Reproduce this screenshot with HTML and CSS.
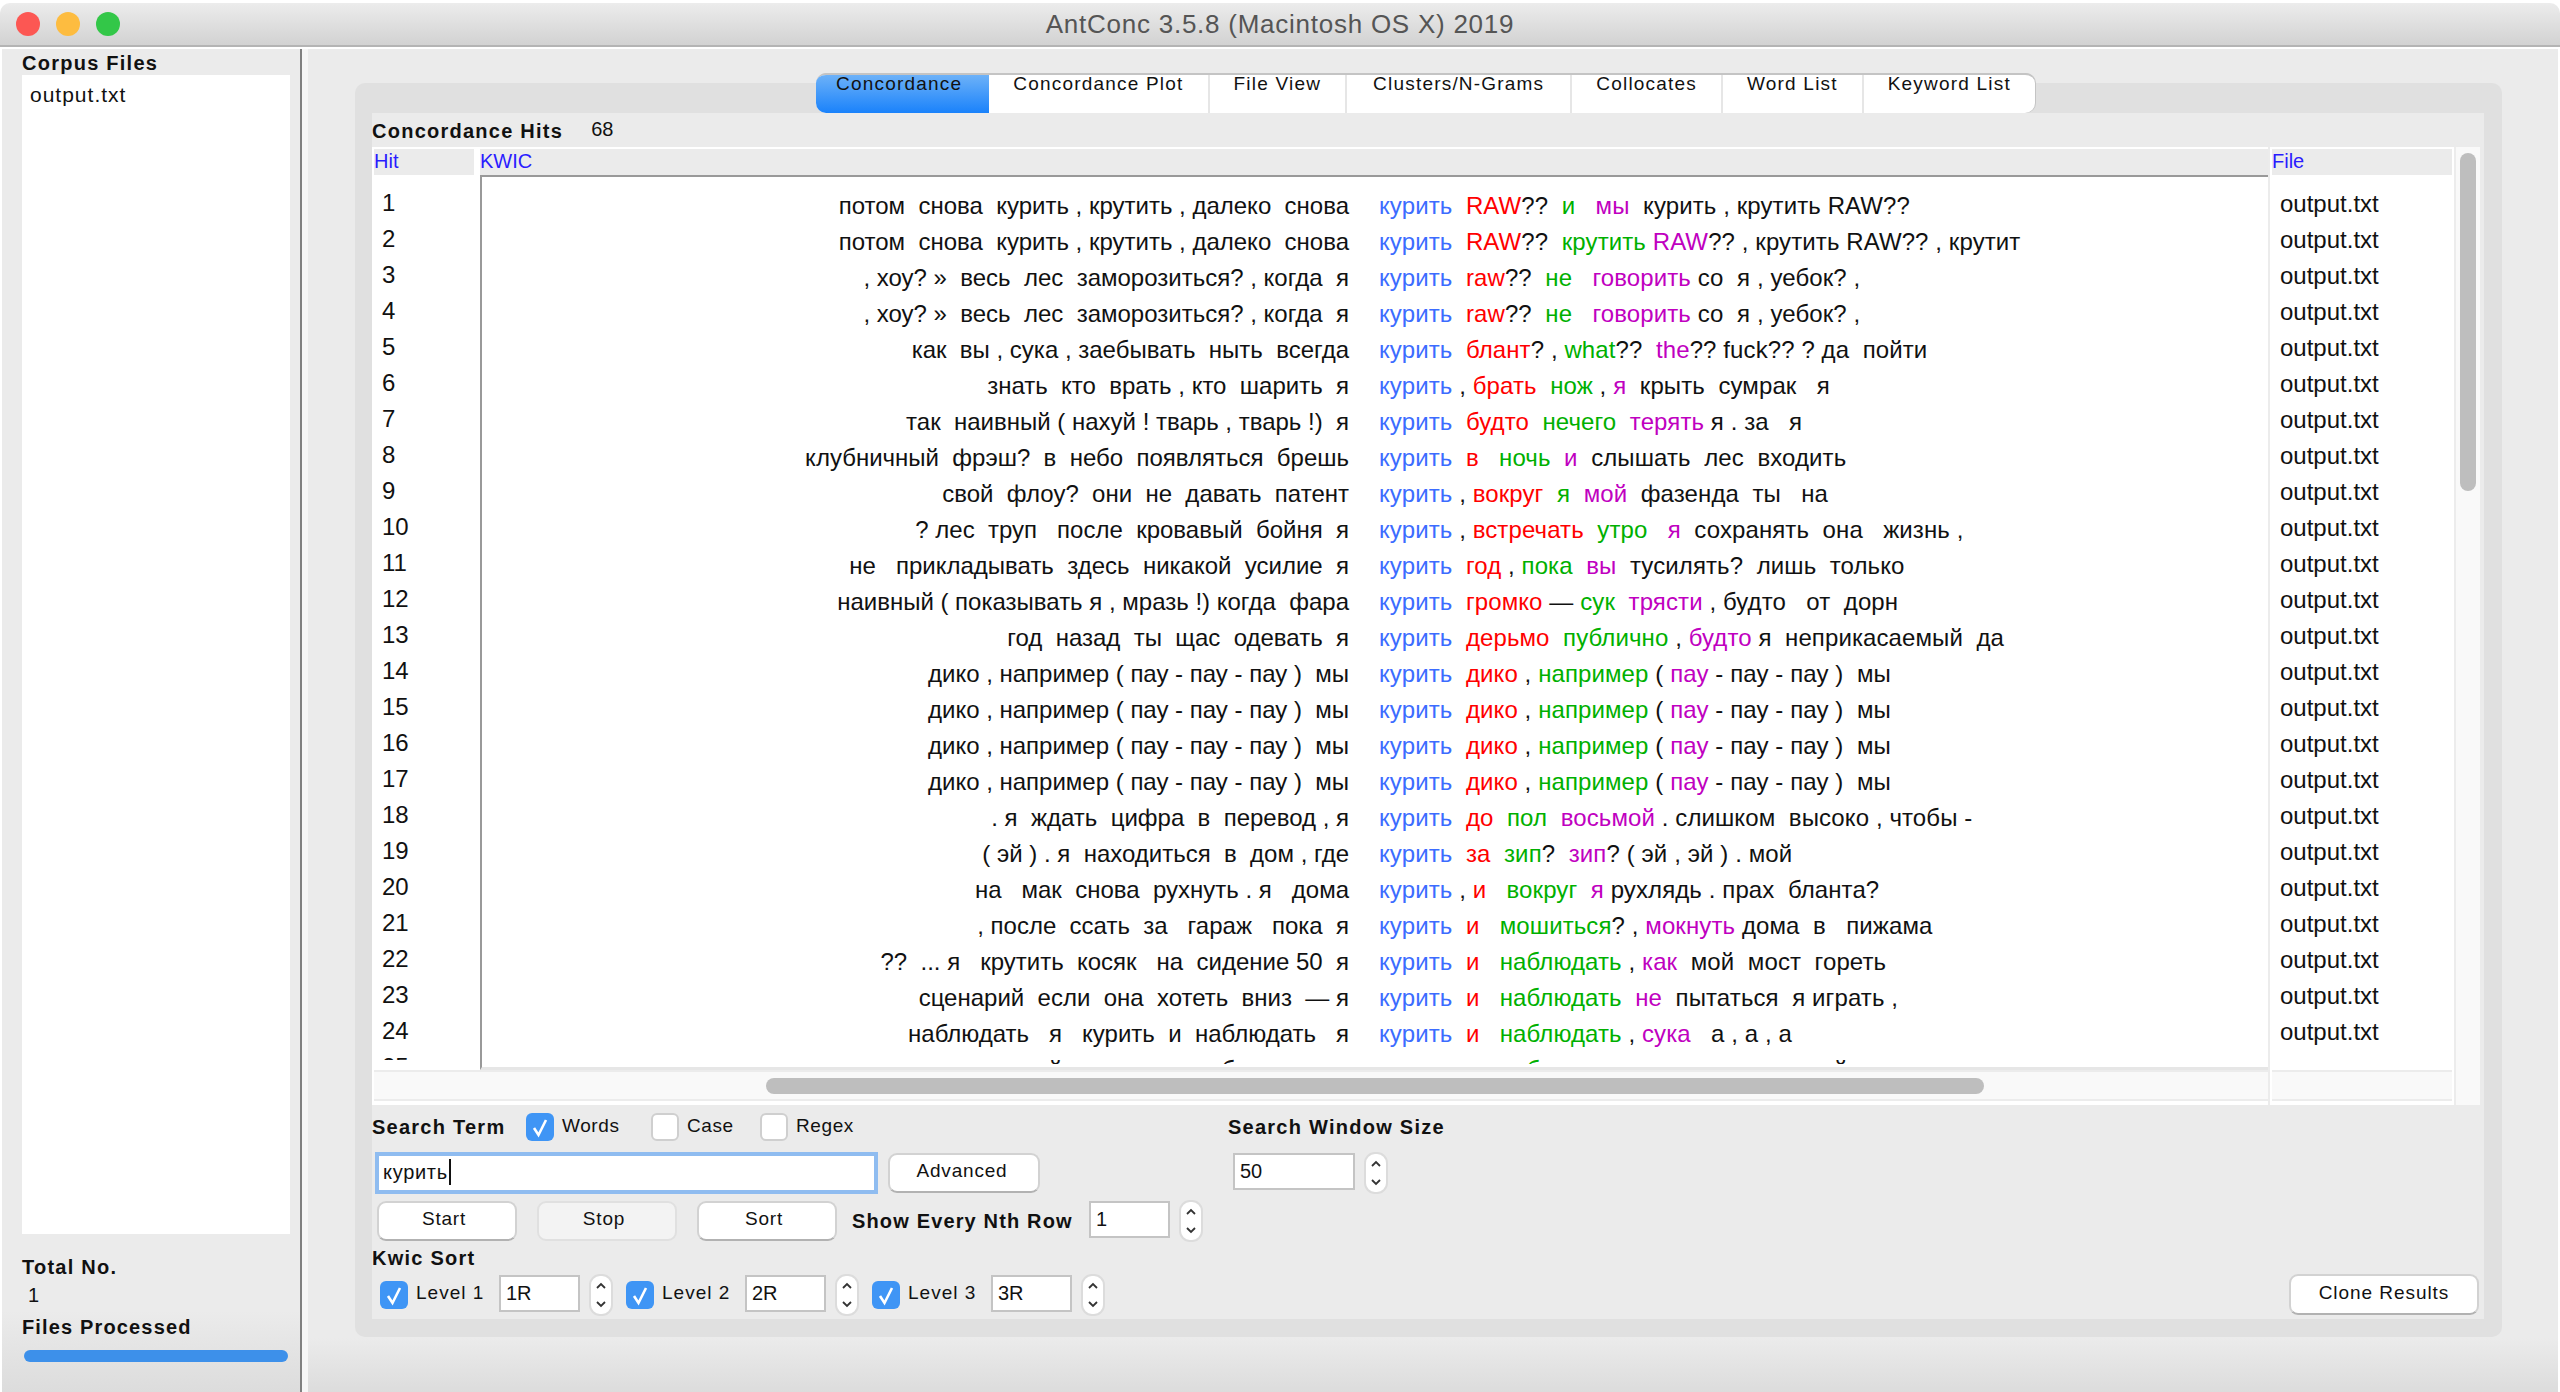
FILE: index.html
```html
<!DOCTYPE html>
<html lang="ru">
<head>
    <meta charset="UTF-8">
    <title>AntConc 3.5.8 (Macintosh OS X) 2019</title>
    <link rel="stylesheet" href="styles.css">
</head>
<body>
<div class="window">
    <div class="titlebar">
        <div class="lights"><span class="light red"></span><span class="light yellow"></span><span class="light green"></span></div>
        <div class="title">AntConc 3.5.8 (Macintosh OS X) 2019</div>
    </div>
    <div class="body">
        <div class="sidebar">
            <div class="label corpus-label">Corpus Files</div>
            <div class="file-list">output.txt</div>
            <div class="label total-label">Total No.</div>
            <div class="total-value">1</div>
            <div class="label processed-label">Files Processed</div>
            <div class="progress"></div>
        </div>
        <div class="main">
            <div class="panel">
                <div class="tabs">
                    <div class="tab active">Concordance</div>
                    <div class="tab">Concordance Plot</div>
                    <div class="tab">File View</div>
                    <div class="tab wide">Clusters/N-Grams</div>
                    <div class="tab">Collocates</div>
                    <div class="tab">Word List</div>
                    <div class="tab">Keyword List</div>
                </div>
                <div class="inner">
                    <div class="hits-row"><span class="label">Concordance Hits</span><span class="hits-count">68</span></div>
                    <div class="table">
                        <div class="col-hit">
                            <div class="col-head">Hit</div>
                            <div class="col-body hit-list">
                                <div>1</div><div>2</div><div>3</div><div>4</div><div>5</div>
                                <div>6</div><div>7</div><div>8</div><div>9</div><div>10</div>
                                <div>11</div><div>12</div><div>13</div><div>14</div><div>15</div>
                                <div>16</div><div>17</div><div>18</div><div>19</div><div>20</div>
                                <div>21</div><div>22</div><div>23</div><div>24</div><div>25</div>
                            </div>
                            <div class="hscroll"></div>
                        </div>
                        <div class="col-kwic">
                            <div class="col-head kwic-head">KWIC</div>
                            <div class="kwic-body">
                                <div class="kwic-rows">
                                <div class="kwic-row"><div class="left">потом  снова  курить , крутить , далеко  снова</div><div class="right"><span class="kw">курить</span>  <span class="r">RAW</span>??  <span class="g">и</span>   <span class="m">мы</span>  курить , крутить RAW??</div></div>
                                <div class="kwic-row"><div class="left">потом  снова  курить , крутить , далеко  снова</div><div class="right"><span class="kw">курить</span>  <span class="r">RAW</span>??  <span class="g">крутить</span> <span class="m">RAW</span>?? , крутить RAW?? , крутит</div></div>
                                <div class="kwic-row"><div class="left">, хоу? »  весь  лес  заморозиться? , когда  я</div><div class="right"><span class="kw">курить</span>  <span class="r">raw</span>??  <span class="g">не</span>   <span class="m">говорить</span> со  я , уебок? ,</div></div>
                                <div class="kwic-row"><div class="left">, хоу? »  весь  лес  заморозиться? , когда  я</div><div class="right"><span class="kw">курить</span>  <span class="r">raw</span>??  <span class="g">не</span>   <span class="m">говорить</span> со  я , уебок? ,</div></div>
                                <div class="kwic-row"><div class="left">как  вы , сука , заебывать  ныть  всегда</div><div class="right"><span class="kw">курить</span>  <span class="r">блант</span>? , <span class="g">what</span>??  <span class="m">the</span>?? fuck?? ? да  пойти</div></div>
                                <div class="kwic-row"><div class="left">знать  кто  врать , кто  шарить  я</div><div class="right"><span class="kw">курить</span> , <span class="r">брать</span>  <span class="g">нож</span> , <span class="m">я</span>  крыть  сумрак   я</div></div>
                                <div class="kwic-row"><div class="left">так  наивный ( нахуй ! тварь , тварь !)  я</div><div class="right"><span class="kw">курить</span>  <span class="r">будто</span>  <span class="g">нечего</span>  <span class="m">терять</span> я . за   я</div></div>
                                <div class="kwic-row"><div class="left">клубничный  фрэш?  в  небо  появляться  брешь</div><div class="right"><span class="kw">курить</span>  <span class="r">в</span>   <span class="g">ночь</span>  <span class="m">и</span>  слышать  лес  входить</div></div>
                                <div class="kwic-row"><div class="left">свой  флоу?  они  не  давать  патент</div><div class="right"><span class="kw">курить</span> , <span class="r">вокруг</span>  <span class="g">я</span>  <span class="m">мой</span>  фазенда  ты   на</div></div>
                                <div class="kwic-row"><div class="left">? лес  труп   после  кровавый  бойня  я</div><div class="right"><span class="kw">курить</span> , <span class="r">встречать</span>  <span class="g">утро</span>   <span class="m">я</span>  сохранять  она   жизнь ,</div></div>
                                <div class="kwic-row"><div class="left">не   прикладывать  здесь  никакой  усилие  я</div><div class="right"><span class="kw">курить</span>  <span class="r">год</span> , <span class="g">пока</span>  <span class="m">вы</span>  тусилять?  лишь  только</div></div>
                                <div class="kwic-row"><div class="left">наивный ( показывать я , мразь !) когда  фара</div><div class="right"><span class="kw">курить</span>  <span class="r">громко</span> — <span class="g">сук</span>  <span class="m">трясти</span> , будто   от  дорн</div></div>
                                <div class="kwic-row"><div class="left">год  назад  ты  щас  одевать  я</div><div class="right"><span class="kw">курить</span>  <span class="r">дерьмо</span>  <span class="g">публично</span> , <span class="m">будто</span> я  неприкасаемый  да</div></div>
                                <div class="kwic-row"><div class="left">дико , например ( пау - пау - пау )  мы</div><div class="right"><span class="kw">курить</span>  <span class="r">дико</span> , <span class="g">например</span> ( <span class="m">пау</span> - пау - пау )  мы</div></div>
                                <div class="kwic-row"><div class="left">дико , например ( пау - пау - пау )  мы</div><div class="right"><span class="kw">курить</span>  <span class="r">дико</span> , <span class="g">например</span> ( <span class="m">пау</span> - пау - пау )  мы</div></div>
                                <div class="kwic-row"><div class="left">дико , например ( пау - пау - пау )  мы</div><div class="right"><span class="kw">курить</span>  <span class="r">дико</span> , <span class="g">например</span> ( <span class="m">пау</span> - пау - пау )  мы</div></div>
                                <div class="kwic-row"><div class="left">дико , например ( пау - пау - пау )  мы</div><div class="right"><span class="kw">курить</span>  <span class="r">дико</span> , <span class="g">например</span> ( <span class="m">пау</span> - пау - пау )  мы</div></div>
                                <div class="kwic-row"><div class="left">. я  ждать  цифра  в  перевод , я</div><div class="right"><span class="kw">курить</span>  <span class="r">до</span>  <span class="g">пол</span>  <span class="m">восьмой</span> . слишком  высоко , чтобы -</div></div>
                                <div class="kwic-row"><div class="left">( эй ) . я  находиться  в  дом , где</div><div class="right"><span class="kw">курить</span>  <span class="r">за</span>  <span class="g">зип</span>?  <span class="m">зип</span>? ( эй , эй ) . мой</div></div>
                                <div class="kwic-row"><div class="left">на   мак  снова  рухнуть . я   дома</div><div class="right"><span class="kw">курить</span> , <span class="r">и</span>   <span class="g">вокруг</span>  <span class="m">я</span> рухлядь . прах  бланта?</div></div>
                                <div class="kwic-row"><div class="left">, после  ссать  за   гараж   пока  я</div><div class="right"><span class="kw">курить</span>  <span class="r">и</span>   <span class="g">мошиться</span>? , <span class="m">мокнуть</span> дома  в   пижама</div></div>
                                <div class="kwic-row"><div class="left">??  ... я   крутить  косяк   на  сидение 50  я</div><div class="right"><span class="kw">курить</span>  <span class="r">и</span>   <span class="g">наблюдать</span> , <span class="m">как</span>  мой  мост  гореть</div></div>
                                <div class="kwic-row"><div class="left">сценарий  если  она  хотеть  вниз  — я</div><div class="right"><span class="kw">курить</span>  <span class="r">и</span>   <span class="g">наблюдать</span>  <span class="m">не</span>  пытаться  я играть ,</div></div>
                                <div class="kwic-row"><div class="left">наблюдать   я   курить  и  наблюдать   я</div><div class="right"><span class="kw">курить</span>  <span class="r">и</span>   <span class="g">наблюдать</span> , <span class="m">сука</span>   а , а , а</div></div>
                                <div class="kwic-row"><div class="left">мой   курить  и  наблюдать   я</div><div class="right"><span class="kw">курить</span>  <span class="r">и</span>   <span class="g">наблюдать</span> , <span class="m">как</span>  я  стоять  мой</div></div>
                                </div>
                            </div>
                            <div class="hscroll"><div class="hscroll-thumb"></div></div>
                        </div>
                        <div class="col-file">
                            <div class="col-head">File</div>
                            <div class="col-body file-rows">
                                <div>output.txt</div><div>output.txt</div><div>output.txt</div><div>output.txt</div><div>output.txt</div>
                                <div>output.txt</div><div>output.txt</div><div>output.txt</div><div>output.txt</div><div>output.txt</div>
                                <div>output.txt</div><div>output.txt</div><div>output.txt</div><div>output.txt</div><div>output.txt</div>
                                <div>output.txt</div><div>output.txt</div><div>output.txt</div><div>output.txt</div><div>output.txt</div>
                                <div>output.txt</div><div>output.txt</div><div>output.txt</div><div>output.txt</div><div>output.txt</div>
                            </div>
                            <div class="hscroll"></div>
                        </div>
                        <div class="vscroll"><div class="vscroll-thumb"></div></div>
                    </div>

                    <div class="row row-a">
                        <div class="label term-label">Search Term</div>
                        <div class="opt opt-words"><span class="check on"><svg viewBox="0 0 28 28" width="28" height="28"><path d="M8 15l4.500 7L20 7" fill="none" stroke="#fff" stroke-width="2.600"/></svg></span><span class="opt-text">Words</span></div>
                        <div class="opt opt-case"><span class="check"></span><span class="opt-text">Case</span></div>
                        <div class="opt opt-regex"><span class="check"></span><span class="opt-text">Regex</span></div>
                        <div class="label window-label">Search Window Size</div>
                    </div>
                    <div class="row row-b">
                        <div class="search-input">курить<span class="caret"></span></div>
                        <div class="btn advanced">Advanced</div>
                        <div class="num window-num">50</div>
                        <div class="stepper"><svg viewBox="0 0 22 42" width="22" height="42"><path d="M7 14l4-4 4 4M7 28l4 4 4-4" fill="none" stroke="#333" stroke-width="1.800"/></svg></div>
                    </div>
                    <div class="row row-c">
                        <div class="btn action">Start</div>
                        <div class="btn action off">Stop</div>
                        <div class="btn action">Sort</div>
                        <div class="label nth-label">Show Every Nth Row</div>
                        <div class="num nth-num">1</div>
                        <div class="stepper"><svg viewBox="0 0 22 42" width="22" height="42"><path d="M7 14l4-4 4 4M7 28l4 4 4-4" fill="none" stroke="#333" stroke-width="1.800"/></svg></div>
                    </div>
                    <div class="label sort-label">Kwic Sort</div>
                    <div class="row row-e">
                        <div class="opt level"><span class="check on"><svg viewBox="0 0 28 28" width="28" height="28"><path d="M8 15l4.500 7L20 7" fill="none" stroke="#fff" stroke-width="2.600"/></svg></span><span class="opt-text">Level 1</span></div>
                        <div class="num level-num">1R</div>
                        <div class="stepper"><svg viewBox="0 0 22 42" width="22" height="42"><path d="M7 14l4-4 4 4M7 28l4 4 4-4" fill="none" stroke="#333" stroke-width="1.800"/></svg></div>
                        <div class="opt level"><span class="check on"><svg viewBox="0 0 28 28" width="28" height="28"><path d="M8 15l4.500 7L20 7" fill="none" stroke="#fff" stroke-width="2.600"/></svg></span><span class="opt-text">Level 2</span></div>
                        <div class="num level-num">2R</div>
                        <div class="stepper"><svg viewBox="0 0 22 42" width="22" height="42"><path d="M7 14l4-4 4 4M7 28l4 4 4-4" fill="none" stroke="#333" stroke-width="1.800"/></svg></div>
                        <div class="opt level"><span class="check on"><svg viewBox="0 0 28 28" width="28" height="28"><path d="M8 15l4.500 7L20 7" fill="none" stroke="#fff" stroke-width="2.600"/></svg></span><span class="opt-text">Level 3</span></div>
                        <div class="num level-num">3R</div>
                        <div class="stepper"><svg viewBox="0 0 22 42" width="22" height="42"><path d="M7 14l4-4 4 4M7 28l4 4 4-4" fill="none" stroke="#333" stroke-width="1.800"/></svg></div>
                        <div class="btn clone">Clone Results</div>
                    </div>
                </div>
            </div>
        </div>
    </div>
</div>
</body>
</html>
```
FILE: styles.css
```css
html, body {
    margin: 0;
    padding: 0;
    background: #fff;
}
.window {
    width: 2560px;
    height: 1392px;
    display: flex;
    flex-direction: column;
    overflow: hidden;
    font-family: "Liberation Sans", Arial, sans-serif;
    color: #111;
}
.titlebar {
    height: 42px;
    margin-top: 3px;
    border-bottom: 2px solid #b4b4b4;
    background: linear-gradient(#ececec, #d2d2d2);
    border-radius: 10px 10px 0 0;
    display: flex;
    align-items: center;
    position: relative;
}
.lights {
    display: flex;
    gap: 16px;
    margin-left: 16px;
    position: absolute;
    top: 9px;
}
.light {
    width: 24px;
    height: 24px;
    border-radius: 50%;
}
.light.red { background: #fc5753; }
.light.yellow { background: #fdbc40; }
.light.green { background: #33c748; }
.title {
    width: 100%;
    text-align: center;
    font-size: 26px;
    letter-spacing: 0.75px;
    color: #555;
}
.body {
    flex: 1;
    display: flex;
    margin-top: 2px;
    padding: 0 2px;
    min-height: 0;
}
.label {
    font-size: 20px;
    font-weight: bold;
    letter-spacing: 1.25px;
    white-space: nowrap;
}

/* left column */
.sidebar {
    border-right: 2px solid #808080;
    background: linear-gradient(#ebebeb 94%, #dcdcdc);
    padding: 0 10px 30px 20px;
    box-sizing: border-box;
    width: 300px;
    display: flex;
    flex-direction: column;
}
.corpus-label {
    height: 26px;
    line-height: 28px;
}
.file-list {
    flex: 1;
    background: #fff;
    padding: 8px 8px;
    font-size: 21px;
    letter-spacing: 1px;
}
.total-label {
    margin-top: 23px;
    line-height: 20px;
}
.total-value {
    margin-top: 6px;
    padding-left: 6px;
    font-size: 20px;
    line-height: 24px;
}
.processed-label {
    margin-top: 10px;
    line-height: 20px;
    letter-spacing: 1.15px;
}
.progress {
    margin: 13px 0 0 2px;
    width: 264px;
    height: 12px;
    border-radius: 6px;
    background: #3d90ea;
}

/* right side */
.main {
    flex: 1;
    border-left: 6px solid #f6f6f6;
    background: linear-gradient(#ebebeb 96%, #dcdcdc);
    padding: 34px 56px 0 47px;
    min-width: 0;
}
.panel {
    height: 1254px;
    background: #e0e0e0;
    border-radius: 10px;
    padding: 0 18px 18px 17px;
    box-sizing: border-box;
    display: flex;
    flex-direction: column;
}
.tabs {
    display: flex;
    align-self: center;
    height: 40px;
    margin: -10px 0 0 -5px;
    background: #fff;
    border-top: 2px solid #c4c4c4;
    border-radius: 10px;
    box-sizing: border-box;
    box-shadow: 1px 0 0 #c4c4c4;
    overflow: hidden;
    flex: none;
}
.tab {
    padding: 0 24px;
    font-size: 19px;
    letter-spacing: 1.2px;
    line-height: 18px;
    white-space: nowrap;
    border-right: 2px solid #e6e6e6;
}
.tab:last-child { border-right: none; }
.tab.active {
    background: linear-gradient(#71b4f8, #1a82fb);
    margin-top: -2px;
    padding: 2px 27px 0 20px;
    border-right: none;
}
.tab.wide { padding: 0 26px; }
.inner {
    flex: 1;
    background: #ebebeb;
    display: flex;
    flex-direction: column;
}
.hits-row {
    height: 34px;
    line-height: 36px;
    display: flex;
}
.hits-count {
    margin-left: 28px;
    font-size: 20px;
    line-height: 33px;
}
.table {
    height: 958px;
    width: 2108px;
    background: #fff;
    display: flex;
    flex: none;
}
.col-head {
    height: 26px;
    margin-top: 2px;
    background: #ebebeb;
    color: #2a1cff;
    font-size: 20px;
    line-height: 25px;
}
.col-hit {
    width: 108px;
    padding-left: 2px;
    box-sizing: border-box;
    display: flex;
    flex-direction: column;
}
.col-hit .col-head {
    margin-right: 6px;
}
.col-body {
    flex: 1;
    min-height: 0;
    overflow: hidden;
    margin-bottom: 8px;
    font-size: 24px;
    line-height: 36px;
}
.hit-list {
    padding: 10px 0 0 8px;
}
.hscroll {
    height: 27px;
    margin-top: 2px;
    margin-bottom: 4px;
    background: #f9f9f9;
    border-top: 2px solid #ececec;
    border-bottom: 2px solid #ececec;
    display: flex;
    align-items: center;
    flex: none;
}
.col-kwic {
    width: 1788px;
    display: flex;
    flex-direction: column;
}
.kwic-head {
    padding-left: 0;
    border-bottom: 2px solid #999;
}
.kwic-body {
    flex: 1;
    min-height: 0;
    border-left: 2px solid #999;
    border-bottom: 3px solid #e6e6e6;
    padding-top: 11px;
    font-size: 24px;
    line-height: 36px;
}
.kwic-rows {
    height: 876px;
    overflow: hidden;
}
.col-kwic .hscroll {
    margin-top: 0;
}
.kwic-row {
    display: grid;
    grid-template-columns: 867px 1fr;
    column-gap: 30px;
}
.left, .right { white-space: pre; }
.left { text-align: right; }
.right { letter-spacing: 0.1px; }
.kw { color: #3c6cff; }
.r { color: #f00; }
.g { color: #00b000; }
.m { color: #c000c0; }
.hscroll-thumb {
    width: 1218px;
    height: 16px;
    margin-left: 286px;
    border-radius: 8px;
    background: #bebebe;
}
.col-file {
    width: 186px;
    padding: 0 2px;
    box-sizing: border-box;
    border-left: 2px solid #ececec;
    display: flex;
    flex-direction: column;
}
.file-rows {
    padding: 11px 0 0 8px;
}
.vscroll {
    width: 26px;
    border-left: 2px solid #ececec;
    background: #f9f9f9;
    padding: 6px 4px 0 4px;
    box-sizing: border-box;
}
.vscroll-thumb {
    width: 16px;
    height: 338px;
    border-radius: 8px;
    background: #bebebe;
}

/* search controls */
.row {
    display: flex;
    align-items: center;
}
.row-a {
    height: 28px;
    margin-top: 8px;
}
.term-label { width: 154px; }
.opt {
    display: flex;
    align-items: center;
    gap: 8px;
    font-size: 19px;
    letter-spacing: 0.6px;
    white-space: pre;
}
.opt-text { padding-bottom: 3px; }
.opt-words { width: 125px; }
.opt-case { width: 109px; }
.opt-regex { width: 468px; }
.check {
    width: 28px;
    height: 28px;
    border: 2px solid #cfcfcf;
    border-radius: 6px;
    background: #fff;
    box-sizing: border-box;
    flex: none;
}
.check.on {
    border: none;
    background: #3f95f5;
}
.check svg { display: block; }
.row-b {
    height: 42px;
    margin-top: 11px;
    padding-left: 3px;
}
.search-input {
    width: 503px;
    height: 42px;
    box-sizing: border-box;
    border: 4px solid #8fbcf0;
    background: #fff;
    font-size: 20px;
    line-height: 32px;
    padding-left: 4px;
    letter-spacing: 0.7px;
}
.caret {
    display: inline-block;
    width: 2px;
    height: 26px;
    background: #111;
    margin-left: 1px;
    vertical-align: -6px;
}
.btn {
    background: #fff;
    border: 2px solid #d2d2d2;
    border-bottom-color: #b2b2b2;
    border-radius: 9px;
    box-sizing: border-box;
    text-align: center;
    font-size: 19px;
    letter-spacing: 0.8px;
    white-space: nowrap;
}
.advanced {
    width: 152px;
    height: 40px;
    line-height: 32px;
    margin-left: 10px;
    padding-right: 4px;
}
.num {
    height: 37px;
    box-sizing: border-box;
    border: 2px solid #c4c4c4;
    background: #fff;
    font-size: 20px;
    line-height: 32px;
    padding-left: 5px;
    flex: none;
}
.window-num {
    width: 122px;
    margin-left: 193px;
    margin-bottom: 4px;
}
.stepper {
    width: 24px;
    height: 42px;
    box-sizing: border-box;
    border: 2px solid #dcdcdc;
    border-radius: 11px;
    background: #fff;
    margin-left: 9px;
    flex: none;
    display: flex;
    justify-content: center;
}
.stepper svg {
    display: block;
    margin-top: -2px;
    flex: none;
}
.row-c {
    height: 42px;
    margin-top: 6px;
    padding-left: 5px;
}
.action {
    width: 140px;
    height: 40px;
    line-height: 32px;
    margin-right: 20px;
    padding-right: 6px;
}
.action.off {
    background: #f3f3f3;
    border-color: #e0e0e0;
}
.nth-label {
    width: 237px;
    margin-left: -5px;
    letter-spacing: 1.15px;
}
.nth-num {
    width: 81px;
    margin-bottom: 4px;
}
.sort-label {
    margin-top: 6px;
    line-height: 20px;
}
.row-e {
    height: 43px;
    margin-top: 5px;
    padding-left: 8px;
}
.level { width: 119px; letter-spacing: 1px; }
.level-num {
    width: 81px;
    margin-bottom: 2px;
}
.row-e .stepper { margin-right: 13px; }
.clone {
    width: 190px;
    height: 41px;
    line-height: 33px;
    margin-left: auto;
    margin-right: 5px;
    letter-spacing: 0.95px;
}
```
